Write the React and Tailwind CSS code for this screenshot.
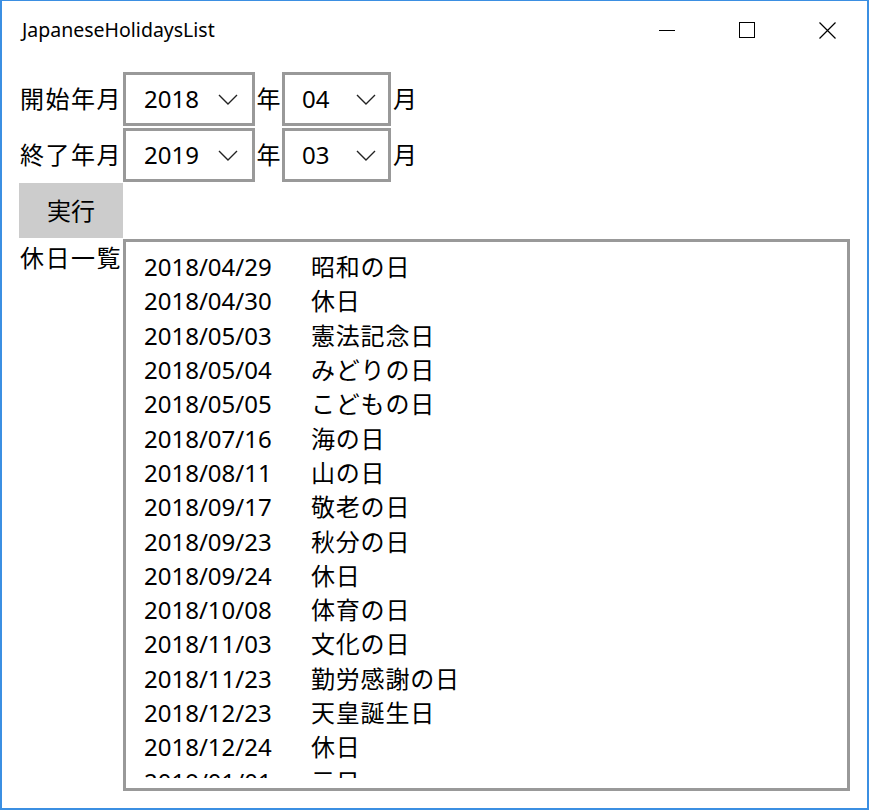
import React from 'react';

const holidays = [
  ['2018/04/29', '昭和の日'],
  ['2018/04/30', '休日'],
  ['2018/05/03', '憲法記念日'],
  ['2018/05/04', 'みどりの日'],
  ['2018/05/05', 'こどもの日'],
  ['2018/07/16', '海の日'],
  ['2018/08/11', '山の日'],
  ['2018/09/17', '敬老の日'],
  ['2018/09/23', '秋分の日'],
  ['2018/09/24', '休日'],
  ['2018/10/08', '体育の日'],
  ['2018/11/03', '文化の日'],
  ['2018/11/23', '勤労感謝の日'],
  ['2018/12/23', '天皇誕生日'],
  ['2018/12/24', '休日'],
  ['2019/01/01', '元日'],
  ['2019/01/14', '成人の日'],
  ['2019/02/11', '建国記念の日'],
  ['2019/03/21', '春分の日'],
];

function Chevron() {
  return (
    <svg width="20" height="11" viewBox="0 0 20 11" className="shrink-0">
      <polyline points="1,1 10,10 19,1" fill="none" stroke="#222" strokeWidth="1.4" />
    </svg>
  );
}

function Combo({ value, width, padLeft, padRight }) {
  return (
    <div className={`h-[54px] border-[3px] border-[#999999] bg-white flex items-center justify-between ${width} ${padLeft} ${padRight}`}>
      <span>{value}</span>
      <Chevron />
    </div>
  );
}

function DateRow({ label, year, month, className = '' }) {
  return (
    <div className={`flex items-center h-[54px] ${className}`}>
      <div className="w-[103px] tracking-[1.5px]">{label}</div>
      <Combo value={year} width="w-[132px]" padLeft="pl-[18px]" padRight="pr-[14px]" />
      <div className="w-[27px] text-center">年</div>
      <Combo value={month} width="w-[109px]" padLeft="pl-[17px]" padRight="pr-[12px]" />
      <div className="pl-[2px]">月</div>
    </div>
  );
}

export default function App() {
  return (
    <div
      className="w-[869px] h-[810px] bg-white border-t border-x-2 border-b-2 border-[#3b8fe2] flex flex-col overflow-hidden text-black"
      style={{ fontFamily: '"Noto Sans", "Noto Sans CJK JP", sans-serif' }}
    >
      {/* title bar */}
      <div className="h-[58px] flex items-center justify-between shrink-0">
        <span className="pl-[20px] text-[19.5px]">JapaneseHolidaysList</span>
        <div className="flex items-center h-full">
          <div className="w-[80px] h-full flex items-center justify-center">
            <div className="w-[16px] h-px bg-black" />
          </div>
          <div className="w-[80px] h-full flex items-center justify-center">
            <div className="w-[16px] h-[16px] border border-black" />
          </div>
          <div className="w-[80px] h-full flex items-center justify-center">
            <svg width="17" height="17" viewBox="0 0 17 17">
              <path d="M0.5 0.5 L16.5 16.5 M16.5 0.5 L0.5 16.5" stroke="#000" strokeWidth="1.2" />
            </svg>
          </div>
        </div>
      </div>

      {/* content */}
      <div className="pl-[18px] pt-[13px] text-[24px] flex flex-col">
        <DateRow label="開始年月" year="2018" month="04" />
        <DateRow label="終了年月" year="2019" month="03" className="mt-[2px]" />
        <button className="w-[104px] h-[55px] mt-[1px] -ml-px bg-[#cccccc] flex items-center justify-center">
          実行
        </button>
        <div className="flex items-start mt-[1px]">
          <div className="w-[103px] leading-[34px] pt-[2px] tracking-[1.5px]">休日一覧</div>
          <div className="w-[727px] h-[552px] border-[3px] border-[#999999] pt-[8px] pb-[10px] pl-[18px]">
            <div className="h-full overflow-hidden">
              {holidays.map(([date, name]) => (
                <div key={date} className="h-[34.3px] flex items-center">
                  <span className="w-[167px] shrink-0">{date}</span>
                  <span className="tracking-[0.8px]">{name}</span>
                </div>
              ))}
            </div>
          </div>
        </div>
      </div>
    </div>
  );
}
